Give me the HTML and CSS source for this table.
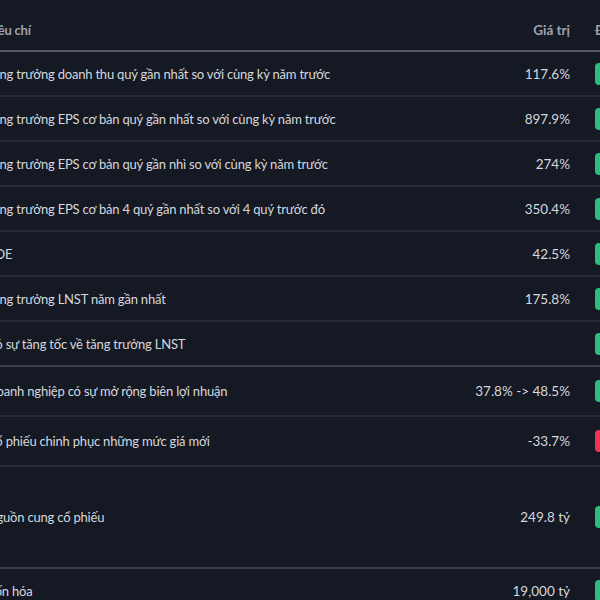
FILE: index.html
```html
<!DOCTYPE html>
<html lang="vi">
<head>
    <meta charset="UTF-8">
    <meta name="viewport" content="width=device-width, initial-scale=1.0">
    <title>Tiêu chí cổ phiếu</title>
    <link rel="stylesheet" href="styles.css">
</head>
<body>
    <div class="table-wrap">
        <table class="criteria-table">
            <colgroup>
                <col class="col-name">
                <col class="col-value">
                <col class="col-rating">
            </colgroup>
            <thead>
                <tr>
                    <th class="cell-name">Tiêu chí</th>
                    <th class="cell-value">Giá trị</th>
                    <th class="cell-rating">Đánh giá</th>
                </tr>
            </thead>
            <tbody>
                <tr>
                    <td class="cell-name">Tăng trưởng doanh thu quý gần nhất so với cùng kỳ năm trước</td>
                    <td class="cell-value">117.6%</td>
                    <td class="cell-rating"><span class="badge badge-pass">Đạt</span></td>
                </tr>
                <tr>
                    <td class="cell-name">Tăng trưởng EPS cơ bản quý gần nhất so với cùng kỳ năm trước</td>
                    <td class="cell-value">897.9%</td>
                    <td class="cell-rating"><span class="badge badge-pass">Đạt</span></td>
                </tr>
                <tr>
                    <td class="cell-name">Tăng trưởng EPS cơ bản quý gần nhì so với cùng kỳ năm trước</td>
                    <td class="cell-value">274%</td>
                    <td class="cell-rating"><span class="badge badge-pass">Đạt</span></td>
                </tr>
                <tr>
                    <td class="cell-name">Tăng trưởng EPS cơ bản 4 quý gần nhất so với 4 quý trước đó</td>
                    <td class="cell-value">350.4%</td>
                    <td class="cell-rating"><span class="badge badge-pass">Đạt</span></td>
                </tr>
                <tr>
                    <td class="cell-name">ROE</td>
                    <td class="cell-value">42.5%</td>
                    <td class="cell-rating"><span class="badge badge-pass">Đạt</span></td>
                </tr>
                <tr>
                    <td class="cell-name">Tăng trưởng LNST năm gần nhất</td>
                    <td class="cell-value">175.8%</td>
                    <td class="cell-rating"><span class="badge badge-pass">Đạt</span></td>
                </tr>
                <tr class="row-group-end">
                    <td class="cell-name">Có sự tăng tốc về tăng trưởng LNST</td>
                    <td class="cell-value"></td>
                    <td class="cell-rating"><span class="badge badge-pass">Đạt</span></td>
                </tr>
                <tr class="row-md">
                    <td class="cell-name">Doanh nghiệp có sự mở rộng biên lợi nhuận</td>
                    <td class="cell-value">37.8% -&gt; 48.5%</td>
                    <td class="cell-rating"><span class="badge badge-pass">Đạt</span></td>
                </tr>
                <tr class="row-md">
                    <td class="cell-name">Cổ phiếu chinh phục những mức giá mới</td>
                    <td class="cell-value">-33.7%</td>
                    <td class="cell-rating"><span class="badge badge-fail">Không</span></td>
                </tr>
                <tr class="row-lg row-group-end">
                    <td class="cell-name">Nguồn cung cổ phiếu</td>
                    <td class="cell-value">249.8 tỷ</td>
                    <td class="cell-rating"><span class="badge badge-pass">Đạt</span></td>
                </tr>
                <tr>
                    <td class="cell-name">Vốn hóa</td>
                    <td class="cell-value">19,000 tỷ</td>
                    <td class="cell-rating"><span class="badge badge-pass">Đạt</span></td>
                </tr>
            </tbody>
        </table>
    </div>
</body>
</html>
```

FILE: styles.css
```css
:root {
    --bg-color: #141924;
    --text-color: #d4d7de;
    --muted-color: #9ea3ad;
    --line-color: #252a35;
    --line-strong: #3a3f4a;
    --head-line: #525763;
    --pass-color: #2bbd7e;
    --fail-color: #e8374f;
}

* {
    margin: 0;
    padding: 0;
    box-sizing: border-box;
}

body {
    font-family: Lato, 'Noto Sans', sans-serif;
    font-size: 13px;
    background-color: var(--bg-color);
    color: var(--text-color);
    padding-top: 9px;
    overflow: hidden;
}

.table-wrap {
    width: 600px;
    overflow: hidden;
}

.criteria-table {
    width: 720px;
    margin-left: -29px;
    table-layout: fixed;
    border-collapse: collapse;
}

.col-name { width: 472px; }
.col-value { width: 140px; }
.col-rating { width: 108px; }

th {
    height: 42px;
    font-weight: 700;
    color: var(--muted-color);
    text-align: left;
    border-bottom: 2px solid var(--head-line);
    white-space: nowrap;
}

td {
    height: 45px;
    border-bottom: 2px solid var(--line-color);
    white-space: nowrap;
}

.cell-name {
    padding-left: 16px;
    letter-spacing: -0.2px;
}

.cell-value {
    text-align: right;
    padding-right: 13px;
    font-size: 13.5px;
}

.cell-rating {
    padding-left: 12px;
}

.row-md td {
    height: 50px;
}

.row-lg td {
    height: 102px;
}

.row-group-end td {
    border-bottom-color: var(--line-strong);
}

.badge {
    display: inline-block;
    vertical-align: middle;
    height: 22px;
    line-height: 22px;
    padding: 0 12px;
    min-width: 60px;
    border-radius: 4px;
    color: white;
    font-size: 12px;
    font-weight: 700;
}

.badge-pass {
    background: var(--pass-color);
}

.badge-fail {
    background: var(--fail-color);
}
```
